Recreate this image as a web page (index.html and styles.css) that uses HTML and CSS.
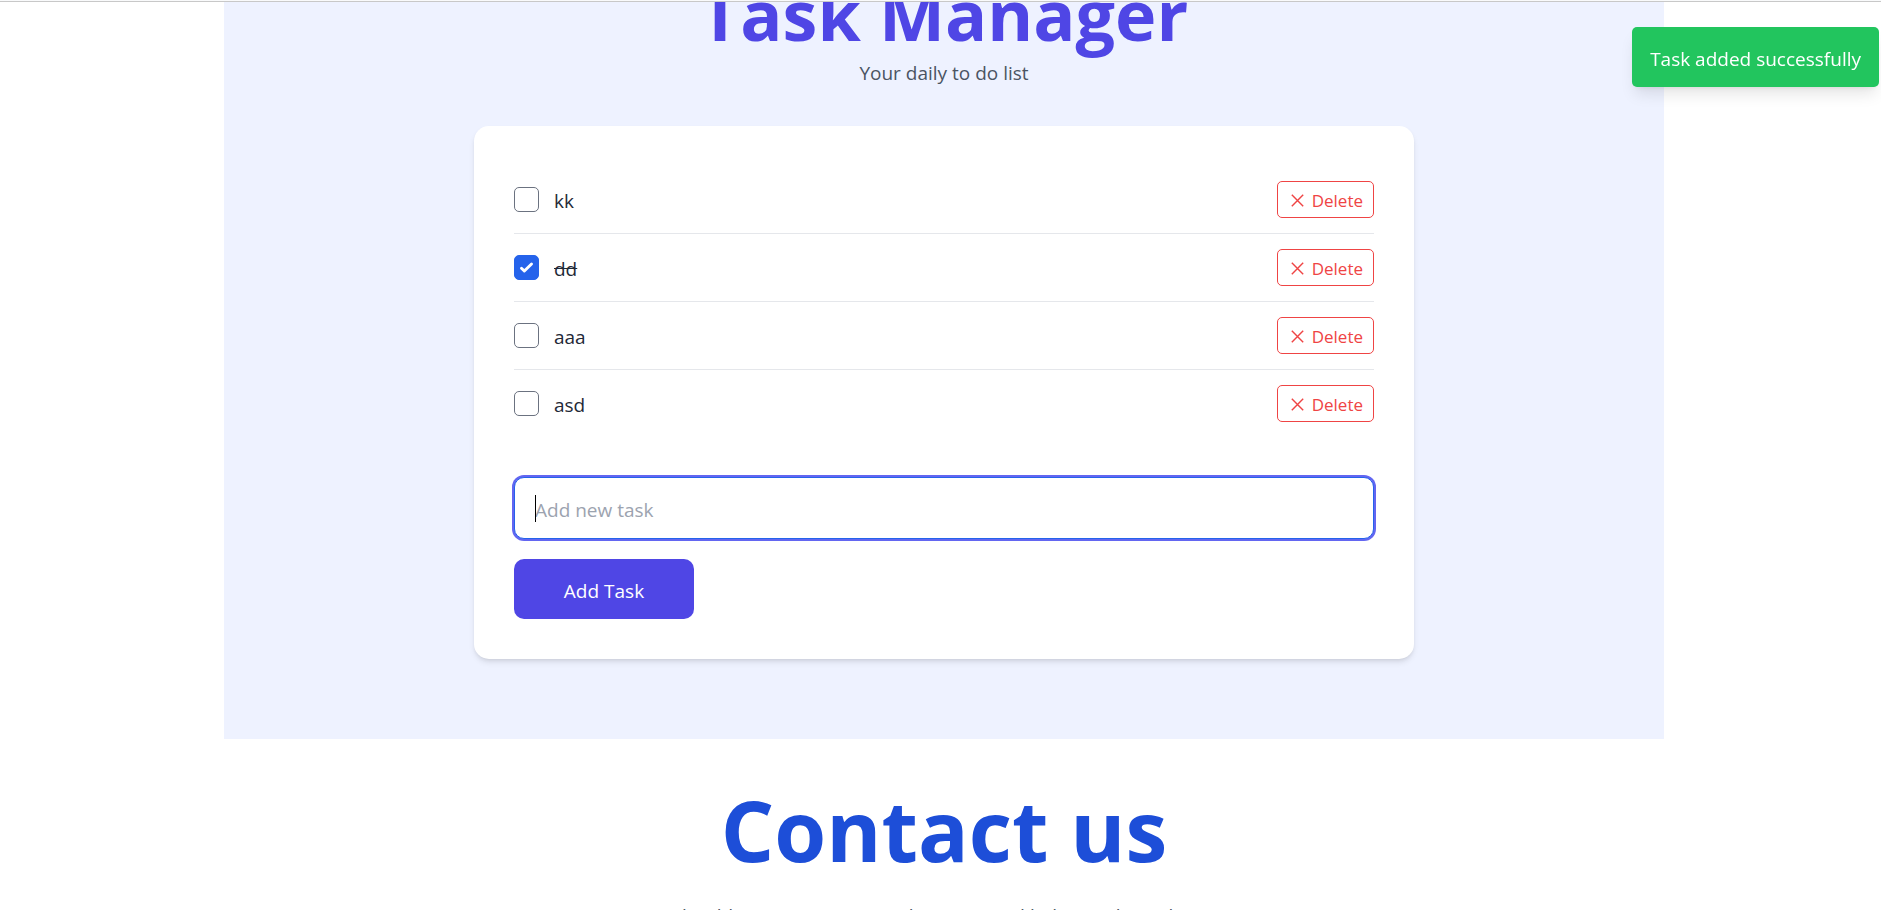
FILE: index.html
```html
<!DOCTYPE html>
<html lang="en">
<head>
<meta charset="utf-8">
<title>Task Manager</title>
<link rel="stylesheet" href="styles.css">
</head>
<body>
<div class="top-line"></div>
<main class="page">
  <section class="tasks">
    <h1 class="tasks-title">Task Manager</h1>
    <p class="tasks-subtitle">Your daily to do list</p>
    <div class="card">
      <ul class="task-list">
        <li class="task">
          <label class="task-label"><input class="task-check" type="checkbox"><span class="task-name">kk</span></label>
          <button class="delete" type="button"><svg class="delete-icon" viewBox="0 0 20 20"><path d="M4 4l12 12M16 4l-12 12"/></svg>Delete</button>
        </li>
        <li class="task">
          <label class="task-label"><input class="task-check" type="checkbox" checked><span class="task-name done">dd</span></label>
          <button class="delete" type="button"><svg class="delete-icon" viewBox="0 0 20 20"><path d="M4 4l12 12M16 4l-12 12"/></svg>Delete</button>
        </li>
        <li class="task">
          <label class="task-label"><input class="task-check" type="checkbox"><span class="task-name">aaa</span></label>
          <button class="delete" type="button"><svg class="delete-icon" viewBox="0 0 20 20"><path d="M4 4l12 12M16 4l-12 12"/></svg>Delete</button>
        </li>
        <li class="task">
          <label class="task-label"><input class="task-check" type="checkbox"><span class="task-name">asd</span></label>
          <button class="delete" type="button"><svg class="delete-icon" viewBox="0 0 20 20"><path d="M4 4l12 12M16 4l-12 12"/></svg>Delete</button>
        </li>
      </ul>
      <form class="add-form">
        <div class="field">
          <input class="new-task" type="text" placeholder="Add new task" aria-label="Add new task">
          <span class="caret"></span>
        </div>
        <button class="add" type="button">Add Task</button>
      </form>
    </div>
  </section>
  <section class="contact">
    <h2 class="contact-title">Contact us</h2>
    <p class="contact-text">Should you encounter any bugs or need help, just let us know</p>
  </section>
</main>
<div class="toast" role="status">Task added successfully</div>
</body>
</html>
```
FILE: styles.css
```css
* {
  box-sizing: border-box;
}

body {
  margin: 0;
  height: 100vh;
  overflow: hidden;
  background: #fff;
  color: #1f2937;
  font-family: "Open Sans", "Noto Sans", sans-serif;
  font-size: 19px;
  line-height: 30px;
}

h1, h2, p, ul {
  margin: 0;
  padding: 0;
}

button, input {
  font: inherit;
}

.top-line {
  position: fixed;
  top: 0;
  left: 0;
  right: 0;
  z-index: 2;
  height: 2px;
  background: #f9fafb;
  border-bottom: 1px solid #c8c8c8;
}

.page {
  padding-left: 7px;
}

.tasks {
  max-width: 1440px;
  margin: -106px auto 0;
  padding: 80px 0;
  background: #eef2ff;
  text-align: center;
}

.tasks-title {
  color: #4f46e5;
  font-size: 70px;
  font-weight: 700;
  line-height: 80px;
}

.tasks-subtitle {
  margin-bottom: 38px;
  padding-top: 4px;
  color: #4b5563;
}

.card {
  max-width: 940px;
  margin: 0 auto;
  padding: 40px;
  border-radius: 15px;
  background: #fff;
  box-shadow: 0 4px 6px -1px rgba(0, 0, 0, 0.1), 0 2px 4px -2px rgba(0, 0, 0, 0.1);
  text-align: left;
}

.task-list {
  margin-bottom: 39px;
  list-style: none;
}

.task {
  display: flex;
  align-items: center;
  justify-content: space-between;
  padding: 15px 0;
  border-bottom: 1px solid #e5e7eb;
}

.task:last-child {
  border-bottom-color: transparent;
}

.task-label {
  display: flex;
  align-items: center;
  gap: 15px;
}

.task-name {
  padding-top: 2px;
}

.task-check {
  appearance: none;
  width: 25px;
  height: 25px;
  margin: 0;
  border: 1px solid #6b7280;
  border-radius: 5px;
  background: #fff;
}

.task-check:checked {
  border-color: #2563eb;
  background: #2563eb url("data:image/svg+xml,%3Csvg viewBox='0 0 16 16' fill='white' xmlns='http://www.w3.org/2000/svg'%3E%3Cpath d='M12.207 4.793a1 1 0 010 1.414l-5 5a1 1 0 01-1.414 0l-2-2a1 1 0 011.414-1.414L6.500 9.086l4.293-4.293a1 1 0 011.414 0z'/%3E%3C/svg%3E") center / 100% no-repeat;
}

.done {
  text-decoration: line-through;
}

.delete {
  display: flex;
  align-items: center;
  gap: 5px;
  height: 37px;
  padding: 2px 10px 0;
  border: 1px solid #ef4444;
  border-radius: 5px;
  background: transparent;
  color: #ef4444;
  font-size: 17px;
}

.delete-icon {
  width: 19px;
  height: 19px;
  fill: none;
  stroke: #ef4444;
  stroke-width: 1.5;
}

.field {
  position: relative;
  margin-bottom: 20px;
}

.new-task {
  display: block;
  width: 100%;
  height: 62px;
  padding: 3px 20px 0;
  border: 1px solid #2563eb;
  border-radius: 10px;
  outline: none;
  box-shadow: 0 0 0 2px #6366f1;
  background: #fff;
}

.new-task::placeholder {
  color: #9ca3af;
  opacity: 1;
}

.caret {
  position: absolute;
  top: 18px;
  left: 21px;
  width: 1px;
  height: 27px;
  background: #000;
}

.add {
  width: 180px;
  height: 60px;
  padding: 3px 0 0;
  border: 0;
  border-radius: 10px;
  background: #4f46e5;
  color: #fff;
}

.contact {
  padding-top: 40px;
  text-align: center;
}

.contact-title {
  margin-bottom: 20px;
  color: #1d4ed8;
  font-size: 84px;
  line-height: 102px;
}

.contact-text {
  color: #4b5563;
}

.toast {
  position: fixed;
  top: 27px;
  right: 2px;
  padding: 17px 18px 13px;
  border-radius: 5px;
  background: #22c55e;
  color: #fff;
  box-shadow: 0 10px 15px -3px rgba(0, 0, 0, 0.1), 0 4px 6px -4px rgba(0, 0, 0, 0.1);
}
```
